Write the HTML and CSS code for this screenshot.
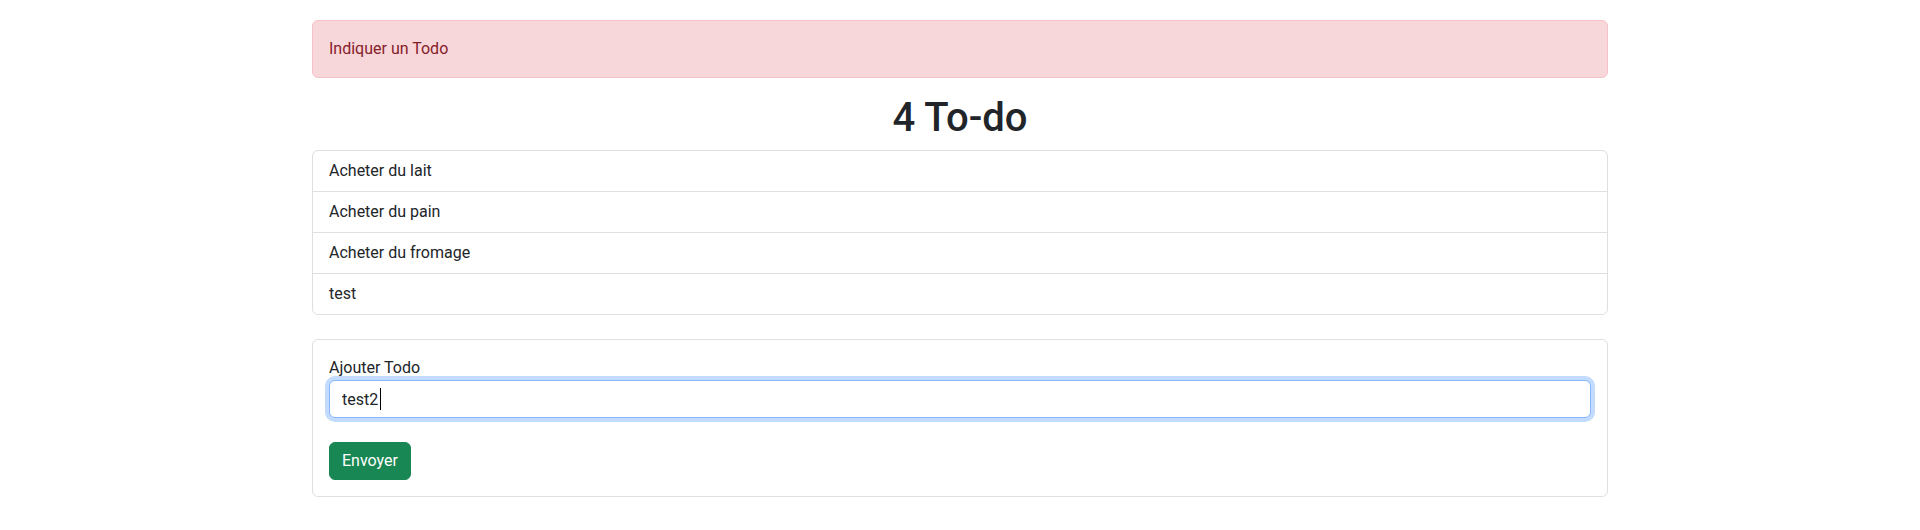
FILE: index.html
```html
<!DOCTYPE html>
<html lang="fr">
<head>
<meta charset="utf-8">
<title>Todo</title>
<link rel="stylesheet" href="styles.css">
</head>
<body>
<div class="container">
  <div class="alert" role="alert">Indiquer un Todo</div>
  <h1 class="title">4 To-do</h1>
  <ul class="list-group">
    <li class="list-item">Acheter du lait</li>
    <li class="list-item">Acheter du pain</li>
    <li class="list-item">Acheter du fromage</li>
    <li class="list-item">test</li>
  </ul>
  <form class="card">
    <div class="card-body">
      <label class="form-label" for="todo">Ajouter Todo</label>
      <div class="input-wrap">
        <input class="form-control focused" id="todo" type="text" value="test2">
        <span class="caret"></span>
      </div>
      <button class="btn-success" type="button">Envoyer</button>
    </div>
  </form>
</div>
</body>
</html>
```

FILE: styles.css
```css
* { box-sizing: border-box; }
html, body { margin: 0; padding: 0; background: #fff; }
body {
  font-family: "Roboto", "Noto Sans", sans-serif;
  font-size: 16px;
  line-height: 24px;
  color: #212529;
}
.container {
  width: 1320px;
  margin: 0 auto;
  padding: 20px 12px 0;
}
.alert {
  background: #f8d7da;
  border: 1px solid #f5c2c7;
  color: #842029;
  border-radius: 6px;
  padding: 16px;
  margin-bottom: 16px;
}
.title {
  margin: 0 0 8px;
  text-align: center;
  font-size: 40px;
  line-height: 48px;
  font-weight: 500;
}
.list-group {
  list-style: none;
  margin: 0;
  padding: 0;
  border: 1px solid #dfdfdf;
  border-radius: 6px;
}
.list-item {
  padding: 8px 16px;
  border-top: 1px solid #dfdfdf;
  height: 41px;
}
.list-item:first-child { border-top: 0; height: 40px; }
.card {
  margin: 24px 0 0;
  border: 1px solid #dfdfdf;
  border-radius: 6px;
}
.card-body {
  padding: 16px;
  display: flex;
  flex-direction: column;
  align-items: flex-start;
}
.form-label { display: block; }
.input-wrap {
  position: relative;
  width: 100%;
  margin-bottom: 24px;
}
.form-control {
  display: block;
  width: 100%;
  height: 38px;
  padding: 6px 12px;
  font: inherit;
  color: #212529;
  background: #fff;
  border: 1px solid #ced4da;
  border-radius: 6px;
  outline: none;
}
.form-control.focused {
  border-color: #86b7fe;
  box-shadow: 0 0 0 4px rgba(13, 110, 253, 0.25);
  caret-color: transparent;
}
.caret {
  position: absolute;
  left: 51px;
  top: 8px;
  width: 1px;
  height: 22px;
  background: #000;
}
.btn-success {
  font: inherit;
  color: #fff;
  background: #198754;
  border: 1px solid #198754;
  border-radius: 6px;
  padding: 6px 12px;
  height: 38px;
}
```
